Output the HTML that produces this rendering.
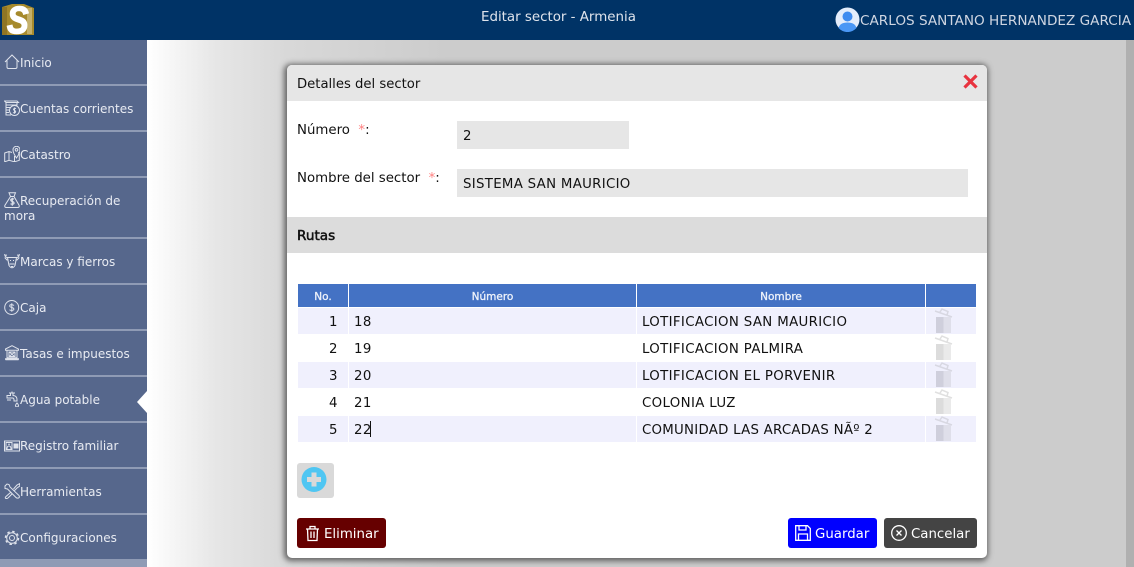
<!DOCTYPE html>
<html><head><meta charset="utf-8"><style>
*{box-sizing:border-box}
html,body{margin:0;padding:0;width:1134px;height:567px;overflow:hidden;background:#ccc;font-family:"DejaVu Sans",Verdana,sans-serif;position:relative}
.a{position:absolute;white-space:nowrap}
#top{left:0;top:0;width:1134px;height:40px;background:#003366}
#bg{left:147px;top:40px;width:979px;height:527px;background:linear-gradient(90deg,#fff 0,#e6e6e6 70px,#d8d8d8 140px,#ccc 300px,#ccc 100%)}
#sb{left:1126px;top:40px;width:8px;height:527px;background:#b0b0b0}
#side{left:0;top:40px;width:147px;height:527px;background:#8f9bb5}
.it{position:absolute;left:0;width:147px;background:#56678c;color:#e8ebf2;font-size:12px;line-height:16px}
.it span{position:absolute;left:20px;white-space:nowrap;margin-top:1px}
.it svg{position:absolute;left:4px;width:16px;height:16px;fill:none;stroke:#dfe3ec;stroke-width:1}
#modal{left:287px;top:65px;width:700px;height:493px;background:#fff;border-radius:5px;box-shadow:-1px 1px 6px 2px rgba(60,60,60,.75)}
.t{position:absolute;font-size:13.33px;color:#111;line-height:16px;white-space:nowrap}
.r{color:#ff7f7f}
.inp{position:absolute;background:#e6e6e6;height:28px;font-size:13.33px;line-height:32px;padding-left:6px;color:#111;letter-spacing:.3px}
.row{position:absolute;left:298px;width:678px;height:26px}
.c{position:absolute;top:1px;height:26px;line-height:28px;font-size:13.33px;color:#111;white-space:nowrap;letter-spacing:.35px}
.h{position:absolute;top:284px;height:23px;background:#4472c4;color:#eef2fa;font-size:10.5px;-webkit-text-stroke:.3px #eef2fa;text-align:center;line-height:26px}
.btn{position:absolute;top:518px;height:30px;border-radius:3px;color:#fff;font-size:13.33px;line-height:30px;white-space:nowrap}
.btn svg{position:absolute;fill:none;stroke:#fff;stroke-width:1.3}
.btn span{position:absolute;top:0;margin-top:2px}
</style></head><body>
<div class="a" id="bg"></div>
<div class="a" id="sb"></div>
<div class="a" id="top"></div>
<svg class="a" style="left:2px;top:3px" width="32" height="32" viewBox="0 0 32 32"><path d="M0 4 L10 1 H22 L32 5 V32 H0Z" fill="#a68a2c"/><path d="M25 5h5v26h-5z" fill="#c4b06a"/><path d="M0 4h5v28H0z" fill="#8e7524"/></svg>
<div class="a" style="left:7px;top:4px;font:italic bold 38px 'Liberation Sans',sans-serif;color:#fff;line-height:34px;-webkit-text-stroke:1.5px #fff;transform:scaleX(.85);transform-origin:left top">S</div>
<div class="a" style="left:481px;top:10px;font-size:13.4px;line-height:16px;color:#dfe4ec">Editar sector - Armenia</div>
<svg class="a" style="left:835px;top:7px" width="25" height="25" viewBox="0 0 25 25"><circle cx="12.5" cy="12.5" r="12" fill="#e4edfb"/><circle cx="12.5" cy="9.5" r="5" fill="#3f8cf0"/><path d="M3.5 21 Q5 15.5 12.5 15.5 Q20 15.5 21.500 21 A12 12 0 0 1 3.500 21Z" fill="#4a97f5"/></svg>
<div class="a" style="left:860px;top:13px;font-size:13.6px;line-height:16px;color:#cfd6e2">CARLOS SANTANO HERNANDEZ GARCIA</div>

<div class="a" id="side"></div>
<div class="it" style="top:40px;height:44px"><svg style="top:14px" viewBox="0 0 16 16"><path d="M1 8 L8 1 L15 8 M3 6.500 V13 Q3 14.500 4.500 14.500 H11.500 Q13 14.500 13 13 V6.500"/></svg><span style="top:14px">Inicio</span></div>
<div class="it" style="top:86px;height:44px"><svg style="top:14px" viewBox="0 0 16 16"><path d="M.5 1H13L14.500 2.500H2ZM2 2.500V5H13V2.500M2 5V7.500H7M2 7.500V10H5M2 10V12.500H5M2 12.500V15H7"/><circle cx="10.500" cy="10.500" r="5"/><path d="M12 8.500Q10 7.800 9.500 9.500Q9.800 10.500 11 10.700Q12.300 11.500 11 12.800Q9.800 13 9 12.500M10.500 7.500V13.800"/></svg><span style="top:14px">Cuentas corrientes</span></div>
<div class="it" style="top:132px;height:44px"><svg style="top:14px" viewBox="0 0 16 16"><path d="M8 6.500L5 5.500L.7 7V15.800L5 14.300L10.500 15.800L15.300 14.300V6.500L14 7M5 5.500V14.300M10.500 10V15.800"/><path d="M12.500 12Q9 7 9 3.800A3.500 3.500 0 0 1 16 3.800Q16 7 12.500 12Z"/><circle cx="12.500" cy="3.800" r="1.300"/></svg><span style="top:14px">Catastro</span></div>
<div class="it" style="top:178px;height:59px"><svg style="top:14px" viewBox="0 0 16 16"><path d="M5 .7H11.500L10 4.500H6.500ZM6.500 4.500L.8 13.500Q.3 15.500 2.500 15.500H13.500Q15.700 15.500 15.200 13.500L10 4.500"/><path d="M10 7.300Q8.300 6.200 6.800 7.500Q6.500 9 8.200 9.500Q10.300 10 10 11.500Q8.300 13 6.500 11.700M8.300 5.800V13.800" stroke-width="1.200"/></svg><span style="top:14px">Recuperación de</span><span style="left:4px;top:29px">mora</span></div>
<div class="it" style="top:239px;height:44px"><svg style="top:14px" viewBox="0 0 16 16"><path d="M.7 1Q.7 4 3 4.500H13Q15.300 4 15.300 1M.7 4.500L3 7H4.500M15.300 4.500L13 7H11.500M3.500 4.500L5 12.500Q8 17 11 12.500L12.500 4.500M6 7.500H7M9 7.500H10M5.500 11H10.500M7 13.500H9M1 2.500L3 2M15 2.500L13 2"/></svg><span style="top:14px">Marcas y fierros</span></div>
<div class="it" style="top:285px;height:44px"><svg style="top:14px" viewBox="0 0 16 16"><circle cx="7.700" cy="8.500" r="7"/><path d="M10 6.500Q8 5 6 6Q5 7.800 7.500 8.400Q10.300 9 9.800 10.700Q8 12.200 5.500 10.800M7.800 4.300V12.700"/></svg><span style="top:14px">Caja</span></div>
<div class="it" style="top:331px;height:44px"><svg style="top:14px" viewBox="0 0 16 16"><path d="M1.500 4 L8 .7 L14.500 4 V5.300H1.500Z M3 5.300V12.700M13 5.300V12.700M2.500 12.700H13.500M1.500 14.700H14.500M1.500 14.700V13.700H14.500V14.700M5 7H11V11.500H5ZM5 11.500L11 7M5.500 7L10.500 11.500"/></svg><span style="top:14px">Tasas e impuestos</span></div>
<div class="it" style="top:377px;height:44px"><svg style="top:14px" viewBox="0 0 16 16"><path d="M5 2H11M8 .5V2M6.500 2V4.500H3V7H8.500Q10 7 10 9V10H13V9Q13 4.500 9 4.500V2M3 9H7M13 12Q11.500 13.500 11.500 14.500A1.500 1.500 0 0 0 14.500 14.500Q14.500 13.500 13 12Z"/></svg><span style="top:14px">Agua potable</span></div>
<div class="a" style="left:137px;top:391px;width:0;height:0;border-top:11px solid transparent;border-bottom:11px solid transparent;border-right:10px solid #fff"></div>
<div class="it" style="top:423px;height:44px"><svg style="top:14px" viewBox="0 0 16 16"><path d="M.5 4H15.500V14H.5Z M2 5.500H8V12.500H2Z M3 12 Q3 9 5 9 Q7 9 7 12 M4 7.200H6"/><path d="M9.500 6.500H14.500V11.500H9.500Z" fill="#dfe3ec" stroke="none"/></svg><span style="top:14px">Registro familiar</span></div>
<div class="it" style="top:469px;height:44px"><svg style="top:14px" viewBox="0 0 16 16"><path d="M1 3 L3 1 L5 1.500 L6 4 L15 12.500 Q16 14.500 14.500 15 Q13 15.500 12 14.500 L3.500 6 L1 5.500Z M9.500 6 L13 2 L15.500 .7 L15.800 3 L13 5 L10.500 7.500 M6.500 9.500 L2 13.500 Q.5 15 2 15.500 Q3.500 15.800 4.500 14.500 L8 11"/></svg><span style="top:14px">Herramientas</span></div>
<div class="it" style="top:515px;height:44px"><svg style="top:14px" viewBox="0 0 16 16"><circle cx="8" cy="9" r="2.500"/><circle cx="8" cy="9" r="5.300"/><circle cx="8" cy="9" r="6.500" stroke-width="1.500" stroke-dasharray="2.500 2.600"/></svg><span style="top:14px">Configuraciones</span></div>

<div class="a" id="modal"></div>
<div class="a" style="left:287px;top:65px;width:700px;height:36px;background:#e6e6e6;border-radius:5px 5px 0 0"></div>
<div class="t" style="left:297px;top:75px;font-size:13.2px;margin-top:2px">Detalles del sector</div>
<svg class="a" style="left:962px;top:73px" width="17" height="17" viewBox="0 0 17 17"><path d="M2.500 2.500L14.500 14.500M14.500 2.500L2.500 14.500" stroke="#e8333f" stroke-width="3.200"/></svg>

<div class="t" style="left:297px;top:123px">Número &nbsp;<span class="r">*</span>:</div>
<div class="inp" style="left:457px;top:121px;width:172px">2</div>
<div class="t" style="left:297px;top:171px">Nombre del sector &nbsp;<span class="r">*</span>:</div>
<div class="inp" style="left:457px;top:169px;width:511px">SISTEMA SAN MAURICIO</div>

<div class="a" style="left:287px;top:217px;width:700px;height:36px;background:#dcdcdc"></div>
<div class="t" style="left:297px;top:228px;-webkit-text-stroke:.5px #111;font-size:13.6px">Rutas</div>

<div class="h" style="left:298px;width:50px">No.</div>
<div class="h" style="left:349px;width:287px">Número</div>
<div class="h" style="left:637px;width:288px">Nombre</div>
<div class="h" style="left:926px;width:50px"></div>

<div class="row" style="top:308px;background:#f0f0fd"><div class="c" style="left:31px">1</div><div class="c" style="left:56px">18</div><div class="c" style="left:344px">LOTIFICACION SAN MAURICIO</div></div>
<div class="row" style="top:335px;background:#fff"><div class="c" style="left:31px">2</div><div class="c" style="left:56px">19</div><div class="c" style="left:344px">LOTIFICACION PALMIRA</div></div>
<div class="row" style="top:362px;background:#f0f0fd"><div class="c" style="left:31px">3</div><div class="c" style="left:56px">20</div><div class="c" style="left:344px">LOTIFICACION EL PORVENIR</div></div>
<div class="row" style="top:389px;background:#fff"><div class="c" style="left:31px">4</div><div class="c" style="left:56px">21</div><div class="c" style="left:344px">COLONIA LUZ</div></div>
<div class="row" style="top:416px;background:#f0f0fd"><div class="c" style="left:31px">5</div><div class="c" style="left:56px">22</div><div class="c" style="left:344px;letter-spacing:.25px">COMUNIDAD LAS ARCADAS NÃº 2</div></div>
<div class="a" style="left:370px;top:421px;width:1px;height:16px;background:#111"></div>

<div class="a" style="left:348px;top:308px;width:1px;height:134px;background:#fff"></div>
<div class="a" style="left:636px;top:308px;width:1px;height:134px;background:#fff"></div>
<div class="a" style="left:925px;top:308px;width:1px;height:134px;background:#fff"></div>

<svg class="a" style="left:932px;top:308px" width="22" height="27" viewBox="0 0 22 27"><path d="M3 3L20 9M8 4L10 1L16 3.500L15 7" stroke="#d8d8e2" stroke-width="1.500" fill="none"/><rect x="4" y="9" width="7.500" height="16" fill="#cfcfdc"/><rect x="11.500" y="9" width="7.500" height="16" fill="#dfdfea"/></svg>
<svg class="a" style="left:932px;top:335px" width="22" height="27" viewBox="0 0 22 27"><path d="M3 3L20 9M8 4L10 1L16 3.500L15 7" stroke="#e0e0e0" stroke-width="1.500" fill="none"/><rect x="4" y="9" width="7.500" height="16" fill="#dcdcdc"/><rect x="11.500" y="9" width="7.500" height="16" fill="#eaeaea"/></svg>
<svg class="a" style="left:932px;top:362px" width="22" height="27" viewBox="0 0 22 27"><path d="M3 3L20 9M8 4L10 1L16 3.500L15 7" stroke="#d8d8e2" stroke-width="1.500" fill="none"/><rect x="4" y="9" width="7.500" height="16" fill="#cfcfdc"/><rect x="11.500" y="9" width="7.500" height="16" fill="#dfdfea"/></svg>
<svg class="a" style="left:932px;top:389px" width="22" height="27" viewBox="0 0 22 27"><path d="M3 3L20 9M8 4L10 1L16 3.500L15 7" stroke="#e0e0e0" stroke-width="1.500" fill="none"/><rect x="4" y="9" width="7.500" height="16" fill="#dcdcdc"/><rect x="11.500" y="9" width="7.500" height="16" fill="#eaeaea"/></svg>
<svg class="a" style="left:932px;top:416px" width="22" height="27" viewBox="0 0 22 27"><path d="M3 3L20 9M8 4L10 1L16 3.500L15 7" stroke="#d8d8e2" stroke-width="1.500" fill="none"/><rect x="4" y="9" width="7.500" height="16" fill="#cfcfdc"/><rect x="11.500" y="9" width="7.500" height="16" fill="#dfdfea"/></svg>

<div class="a" style="left:297px;top:463px;width:37px;height:35px;background:#d9d9d9;border-radius:3px"></div>
<svg class="a" style="left:301px;top:467px" width="26" height="26" viewBox="0 0 26 26"><circle cx="13" cy="12.500" r="12.500" fill="#4fc6f2"/><path d="M13 5.500V19.500M6 12.500H20" stroke="#d9d9d9" stroke-width="5"/></svg>

<div class="btn" style="left:297px;width:89px;background:#660000"><svg style="left:8px;top:7px" width="15" height="17" viewBox="0 0 15 17"><path d="M1 4H14M5 4V1.500H10V4M2.500 4L3 15.500H12L12.500 4M6 6.500V13M9 6.500V13"/></svg><span style="left:27px">Eliminar</span></div>
<div class="btn" style="left:788px;width:89px;background:#0000ff"><svg style="left:7px;top:7px" width="16" height="16" viewBox="0 0 16 16"><path d="M.7.7H12.500L15.300 3.500V15.300H.7Z M4 .7V5H11V.7 M3.500 15.300V9H12.500V15.300"/></svg><span style="left:27px">Guardar</span></div>
<div class="btn" style="left:884px;width:93px;background:#444"><svg style="left:7px;top:7px" width="16" height="16" viewBox="0 0 16 16"><circle cx="8" cy="8" r="7.300"/><path d="M5.500 5.500L10.500 10.500M10.500 5.500L5.500 10.500"/></svg><span style="left:27px">Cancelar</span></div>
</body></html>
